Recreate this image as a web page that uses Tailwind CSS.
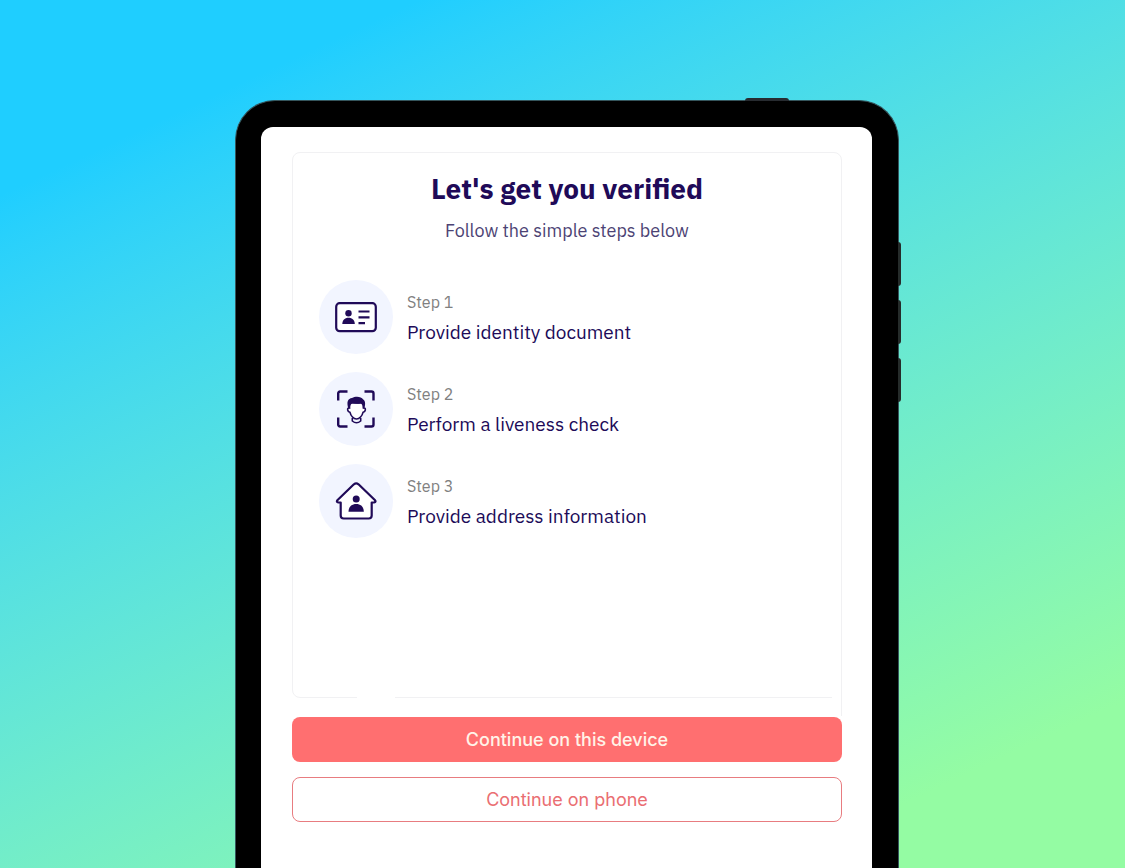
<!DOCTYPE html>
<html lang="en">
<head>
  <meta charset="UTF-8" />
  <meta name="viewport" content="width=device-width, initial-scale=1.0" />
  <title>Let's get you verified</title>
  <script src="https://cdn.jsdelivr.net/npm/@tailwindcss/browser@4"></script>
</head>
<body class="min-h-screen flex flex-col bg-linear-155 from-[#1fceff] from-14% to-[#94fca3] to-88% pt-[100px] pl-[9px] font-['IBM_Plex_Sans','Noto_Sans',sans-serif] text-[#200a58]">

  <!-- Tablet -->
  <div class="relative w-full max-w-[664px] mx-auto flex-1 flex flex-col bg-black border border-b-0 border-[#35555c] rounded-t-[40px] pl-[25px] pr-[26px] pt-[26px]">
    <span class="absolute -top-[3px] right-[109px] w-11 h-[3px] bg-[#272b30] rounded-t-sm"></span>
    <span class="absolute top-[141px] -right-[3px] w-[3px] h-11 bg-[#252b2a] rounded-r-sm"></span>
    <span class="absolute top-[199px] -right-[3px] w-[3px] h-11 bg-[#252b2a] rounded-r-sm"></span>
    <span class="absolute top-[257px] -right-[3px] w-[3px] h-11 bg-[#252b2a] rounded-r-sm"></span>

    <main class="flex-1 flex flex-col bg-white rounded-t-[12px] pt-[25px] pb-[46px] pl-[31px] pr-[30px]">
      <section class="relative min-h-[546px] border border-[#f1f1f3] rounded-lg rounded-br-none px-[26px] pt-4">
        <h1 class="text-center text-[28px] leading-10 font-bold">Let's get you verified</h1>
        <p class="text-center text-[18px] leading-6 mt-[10px] text-[#4c4374]">Follow the simple steps below</p>

        <ol class="mt-[37px] flex flex-col gap-[18px]">
          <li class="flex items-center gap-[14px]">
            <span class="size-[74px] shrink-0 rounded-full bg-[#f2f5ff] flex items-center justify-center">
              <svg class="size-11" viewBox="0 0 44 44" fill="none" stroke="#200a58" stroke-width="2.2" aria-hidden="true">
                <rect x="2.2" y="8.200" width="39.600" height="28" rx="3.500" fill="#fff" />
                <circle cx="14.500" cy="18.300" r="3.200" fill="#200a58" stroke="none" />
                <path d="M8.300 29c0-4 2.500-6.300 6.200-6.300s6.300 2.300 6.300 6.300z" fill="#200a58" stroke="none" />
                <path d="M24.500 16.500h11M24.500 22.300h11M24.500 28.200h6.500" />
              </svg>
            </span>
            <div class="leading-[30px]">
              <p class="text-[16px] text-[#808080]">Step 1</p>
              <p class="text-[19px]">Provide identity document</p>
            </div>
          </li>
          <li class="flex items-center gap-[14px]">
            <span class="size-[74px] shrink-0 rounded-full bg-[#f2f5ff] flex items-center justify-center">
              <svg class="size-11" viewBox="0 0 44 44" fill="none" stroke="#200a58" stroke-width="2.400" aria-hidden="true">
                <path d="M4.200 13.500v-7q0-2 2-2H13.500M30.500 4.500h7q2 0 2 2v7M39.500 30.500v7q0 2-2 2h-7M13.500 39.500H6.200q-2 0-2-2v-7" />
                <path d="M15.500 16v5q-2.200-.3-1.800 2 .4 2.200 2.300 2.400c.8 3.600 3.600 6.600 6.500 6.600s5.700-3 6.500-6.600q1.900-.2 2.300-2.400.4-2.300-1.800-2v-5z" fill="#fff" stroke-width="1.600" />
                <path d="M14.400 21.500c-2.200-7-.4-10 3.600-10.600 3.500-2 9.500-1.500 11 1.300 2.500 1.500 2.700 5.300 1.200 9.300l-1.400-.5c0-2.200-.6-3.700-2-4.800-2.500.9-5.800.8-8.300-.2-1.800 1.200-2.600 2.800-2.600 5z" fill="#200a58" stroke="none" />
                <path d="M18.300 31v3q4.200 3.500 8.400 0v-3" stroke-width="1.600" />
              </svg>
            </span>
            <div class="leading-[30px]">
              <p class="text-[16px] text-[#808080]">Step 2</p>
              <p class="text-[19px]">Perform a liveness check</p>
            </div>
          </li>
          <li class="flex items-center gap-[14px]">
            <span class="size-[74px] shrink-0 rounded-full bg-[#f2f5ff] flex items-center justify-center">
              <svg class="size-11" viewBox="0 0 44 44" fill="none" stroke="#200a58" stroke-width="2.200" stroke-linejoin="round" aria-hidden="true">
                <path d="M6.700 23.500v13q0 3 3 3h25q3 0 3-3v-13h2.300q2.500-.5.800-2.500L24.500 5.300q-2.300-1.700-4.600 0L3.600 21q-1.700 2 .8 2.500z" fill="#fff" />
                <circle cx="22.200" cy="20" r="3.500" fill="#200a58" stroke="none" />
                <path d="M14.500 32.800c0-5 3-7.800 7.700-7.800s7.600 2.800 7.600 7.800z" fill="#200a58" stroke="none" />
              </svg>
            </span>
            <div class="leading-[30px]">
              <p class="text-[16px] text-[#808080]">Step 3</p>
              <p class="text-[19px]">Provide address information</p>
            </div>
          </li>
        </ol>

        <!-- gaps in the bottom edge, right edge runs on down to the button -->
        <span class="absolute -bottom-px left-16 w-[38px] h-px bg-white"></span>
        <span class="absolute -bottom-px right-0 w-[9px] h-px bg-white"></span>
        <span class="absolute top-full -right-px w-px h-[19px] bg-[#f1f1f3]"></span>
      </section>

      <div class="mt-[19px] flex flex-col gap-[15px] font-['Inter',sans-serif] text-[18px]">
        <button type="button" class="h-[45px] rounded-lg bg-[#ff6f70] font-medium text-[#fff3e8] cursor-pointer">Continue on this device</button>
        <button type="button" class="h-[45px] rounded-lg border border-[#e87c80] bg-white text-[#ea6e72] cursor-pointer">Continue on phone</button>
      </div>
    </main>
  </div>

</body>
</html>
